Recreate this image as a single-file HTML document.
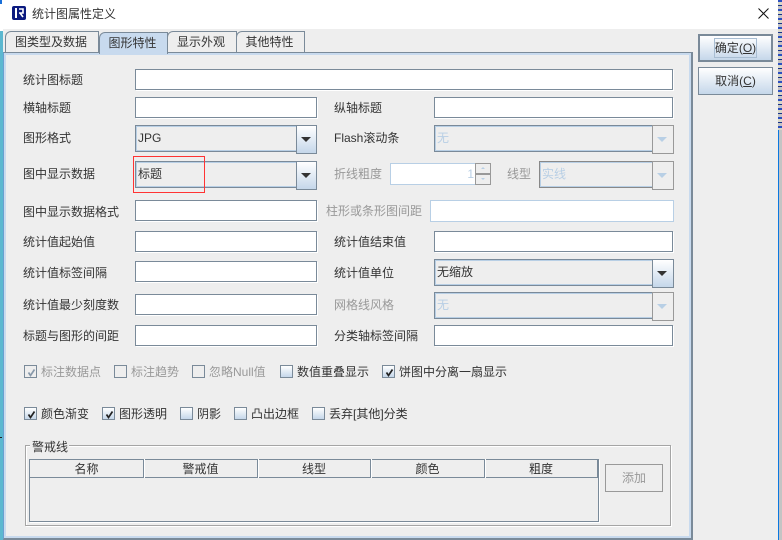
<!DOCTYPE html>
<html><head><meta charset="utf-8">
<style>
html,body{margin:0;padding:0;width:782px;height:540px;overflow:hidden;background:#eee}
body{position:relative;font:12px/16px "WenQuanYi Zen Hei","Liberation Sans","Noto Sans CJK SC",sans-serif;color:#333}
div,span{position:absolute;box-sizing:border-box;white-space:nowrap}
.l{height:16px}
.d{color:#999}
.i{background:#fff;border:1px solid #7a8a99;box-shadow:1px 1px 0 #fff;height:21px}
.di{background:#fff;border:1px solid #b8cfe5;height:22px}
.c{height:27px;border:1px solid #7a8a99;background:#eee;padding-left:2px;line-height:25px}
.c:before{content:"";position:absolute;left:0;top:0;right:18px;bottom:0;border:1px solid #b8cfe5}
.b{position:absolute;right:-1px;top:-1px;width:20px;height:27px;border:1px solid #7a8a99;background:linear-gradient(#fff,#c5d7ea)}
.n .b{width:19px}
.n:before{right:17px}
.b:after{content:"";position:absolute;left:4px;top:11px;border:5px solid transparent;border-top:5px solid #333;border-bottom:0}
.cd .b{border:1px solid #999;background:#eee}
.cd .b:after{border-top-color:#b8cfe5}
.cd span{color:#b8cfe5;left:2px;top:0;line-height:25px}
.k{width:13px;height:13px;border:1px solid #7a8a99;background:linear-gradient(#fff,#c5d7ea)}
.kd{background:#eee}
.k svg{position:absolute;left:1px;top:1px}
.t{top:31px;height:21px;border:1px solid #7a8a99;border-bottom:0;text-align:center;background:#eee;line-height:20px;padding-right:2px;border-top-left-radius:6px 6px}
.btn{left:698px;width:75px;text-align:center;background:linear-gradient(#fff,#c5d7ea);border:1px solid #7a8a99;color:#333}
.th{top:461px;height:16px;text-align:center;line-height:16px}
.v{top:459px;width:1px;height:19px;background:#7a8a99;box-shadow:1px 0 0 #fff}
u{text-decoration:underline}
</style></head><body>
<div style="left:0;top:0;width:782px;height:29px;background:#fff"></div>
<div style="left:0;top:0;width:3px;height:540px;background:#5cb8d0"></div>
<div style="left:0;top:0;width:3px;height:31px;background:#fff"></div>
<div style="left:0;top:0;width:2px;height:4px;background:#1a6fd8"></div>
<div style="left:0;top:437px;width:2px;height:1px;background:#222"></div>
<div style="left:3px;top:29px;width:775px;height:511px;background:#eee"></div>
<div style="left:775px;top:0;width:7px;height:540px;background:#c4c4c4"></div>
<div style="left:778px;top:0;width:1px;height:540px;background:#0a78e0"></div>
<div style="left:776px;top:0;width:6px;height:130px;background:repeating-linear-gradient(#2b4fc0 0 2px,#d8d8c8 2px 5px,#16308a 5px 6px,#c4c4c4 6px 9px)"></div>
<div style="left:775px;top:0;width:3px;height:540px;background:#eee"></div>
<div style="left:775px;top:0;width:3px;height:29px;background:#fff"></div>
<svg style="position:absolute;left:12px;top:6px" width="15" height="15" viewBox="0 0 15 15"><rect width="14" height="14" rx="2" fill="#0b1a80"/><rect x="3" y="2" width="2" height="10" fill="#fff"/><path d="M7 3h4v4H7M8 7l3 4" stroke="#fff" stroke-width="1.6" fill="#0b1a80"/></svg>
<div class="l" style="left:32px;top:6px">统计图属性定义</div>
<svg style="position:absolute;left:758px;top:8px" width="11" height="11"><path d="M.5.5l10 10M10.500.5l-10 10" stroke="#111" stroke-width="1"/></svg>

<div style="left:3px;top:52px;width:690px;height:488px;background:#eee;border:1px solid #7a8a99;border-left-color:#6aa0d0;border-right-width:2px;border-bottom-width:2px;box-shadow:inset 2px 2px 0 #c8daee,inset -2px -2px 0 #c8daee"></div>
<div class="t" style="left:5px;width:94px">图类型及数据</div>
<div class="t" style="left:99px;width:69px;height:22px;top:32px;background:#c8daee;z-index:2">图形特性</div>
<div class="t" style="left:167px;width:70px">显示外观</div>
<div class="t" style="left:236px;width:69px">其他特性</div>

<div class="l" style="left:23px;top:72px">统计图标题</div>
<div class="i" style="left:135px;top:69px;width:538px"></div>
<div class="l" style="left:23px;top:100px">横轴标题</div>
<div class="i" style="left:135px;top:97px;width:182px"></div>
<div class="l" style="left:334px;top:100px">纵轴标题</div>
<div class="i" style="left:434px;top:97px;width:239px"></div>

<div class="l" style="left:23px;top:130px">图形格式</div>
<div class="c n" style="left:135px;top:125px;width:182px">JPG<i class="b"></i></div>
<div class="l" style="left:334px;top:130px">Flash滚动条</div>
<div class="c cd" style="left:434px;top:125px;width:240px"><span>无</span><i class="b"></i></div>

<div class="l" style="left:23px;top:166px">图中显示数据</div>
<div class="c n" style="left:135px;top:161px;width:182px">标题<i class="b"></i></div>
<div style="left:133px;top:156px;width:72px;height:37px;border:1px solid #f33"></div>
<div class="l d" style="left:334px;top:166px">折线粗度</div>
<div class="di" style="left:390px;top:163px;width:86px"></div>
<div class="d" style="left:466px;top:166px;width:8px;text-align:right;color:#b8cfe5">1</div>
<div style="left:475px;top:163px;width:16px;height:11px;border:1px solid #999;background:#eee"></div>
<div style="left:475px;top:174px;width:16px;height:11px;border:1px solid #999;background:#eee"></div>
<div style="left:481px;top:167px;border:2px solid transparent;border-bottom:2px solid #b8cfe5;border-top:0"></div>
<div style="left:481px;top:178px;border:2px solid transparent;border-top:2px solid #b8cfe5;border-bottom:0"></div>
<div class="l d" style="left:507px;top:166px">线型</div>
<div class="c cd" style="left:539px;top:161px;width:135px;border-color:#888"><span>实线</span><i class="b"></i></div>

<div class="l" style="left:23px;top:204px">图中显示数据格式</div>
<div class="i" style="left:135px;top:200px;width:182px"></div>
<div class="l d" style="left:326px;top:203px">柱形或条形图间距</div>
<div class="di" style="left:430px;top:200px;width:244px"></div>

<div class="l" style="left:23px;top:234px">统计值起始值</div>
<div class="i" style="left:135px;top:231px;width:182px"></div>
<div class="l" style="left:334px;top:234px">统计值结束值</div>
<div class="i" style="left:434px;top:231px;width:239px"></div>

<div class="l" style="left:23px;top:265px">统计值标签间隔</div>
<div class="i" style="left:135px;top:261px;width:182px"></div>
<div class="l" style="left:334px;top:265px">统计值单位</div>
<div class="c" style="left:434px;top:259px;width:240px">无缩放<i class="b"></i></div>

<div class="l" style="left:23px;top:297px">统计值最少刻度数</div>
<div class="i" style="left:135px;top:294px;width:182px"></div>
<div class="l d" style="left:334px;top:297px">网格线风格</div>
<div class="c cd" style="left:434px;top:292px;width:240px"><span>无</span><i class="b"></i></div>

<div class="l" style="left:23px;top:328px">标题与图形的间距</div>
<div class="i" style="left:135px;top:325px;width:182px"></div>
<div class="l" style="left:334px;top:328px">分类轴标签间隔</div>
<div class="i" style="left:434px;top:325px;width:239px"></div>

<div class="k kd" style="left:24px;top:365px"><svg width="11" height="11"><path d="M2.500 5.500l2 3 4-6" stroke="#8899aa" stroke-width="1.700" fill="none"/></svg></div>
<div class="l d" style="left:41px;top:364px">标注数据点</div>
<div class="k kd" style="left:114px;top:365px"></div>
<div class="l d" style="left:131px;top:364px">标注趋势</div>
<div class="k kd" style="left:192px;top:365px"></div>
<div class="l d" style="left:209px;top:364px">忽略Null值</div>
<div class="k" style="left:280px;top:365px"></div>
<div class="l" style="left:297px;top:364px">数值重叠显示</div>
<div class="k" style="left:382px;top:365px"><svg width="11" height="11"><path d="M2.500 5.500l2 3 4-6" stroke="#222" stroke-width="1.700" fill="none"/></svg></div>
<div class="l" style="left:399px;top:364px">饼图中分离一扇显示</div>

<div class="k" style="left:24px;top:407px"><svg width="11" height="11"><path d="M2.500 5.500l2 3 4-6" stroke="#222" stroke-width="1.700" fill="none"/></svg></div>
<div class="l" style="left:41px;top:406px">颜色渐变</div>
<div class="k" style="left:102px;top:407px"><svg width="11" height="11"><path d="M2.500 5.500l2 3 4-6" stroke="#222" stroke-width="1.700" fill="none"/></svg></div>
<div class="l" style="left:119px;top:406px">图形透明</div>
<div class="k" style="left:180px;top:407px"></div>
<div class="l" style="left:197px;top:406px">阴影</div>
<div class="k" style="left:234px;top:407px"></div>
<div class="l" style="left:251px;top:406px">凸出边框</div>
<div class="k" style="left:312px;top:407px"></div>
<div class="l" style="left:329px;top:406px">丢弃[其他]分类</div>

<div style="left:25px;top:445px;width:646px;height:81px;border:1px solid #a5a5a5;box-shadow:inset 1px 1px 0 #fff,1px 1px 0 #fff"></div>
<div class="l" style="left:30px;top:439px;width:39px;background:#eee;padding-left:2px">警戒线</div>
<div style="left:29px;top:459px;width:570px;height:63px;border:1px solid #7a8a99;border-bottom-width:1px;box-shadow:1px 1px 0 #fff"></div>
<div style="left:30px;top:477px;width:568px;height:1px;background:#7a8a99"></div>
<div style="left:597px;top:459px;width:2px;height:19px;background:#7a8a99"></div>
<div class="v" style="left:143px"></div>
<div class="v" style="left:257px"></div>
<div class="v" style="left:370px"></div>
<div class="v" style="left:484px"></div>
<div class="th" style="left:30px;width:113px">名称</div>
<div class="th" style="left:144px;width:113px">警戒值</div>
<div class="th" style="left:258px;width:112px">线型</div>
<div class="th" style="left:371px;width:113px">颜色</div>
<div class="th" style="left:485px;width:112px">粗度</div>
<div style="left:605px;top:464px;width:58px;height:28px;border:1px solid #999;text-align:center;line-height:26px;color:#999">添加</div>

<div class="btn" style="top:34px;height:28px;border-width:2px;line-height:24px">确定(<u>O</u>)</div>
<div style="left:714px;top:38px;width:43px;height:20px;border:1px solid #a8bdd2"></div>
<div class="btn" style="top:67px;height:28px;line-height:26px">取消(<u>C</u>)</div>
</body></html>
